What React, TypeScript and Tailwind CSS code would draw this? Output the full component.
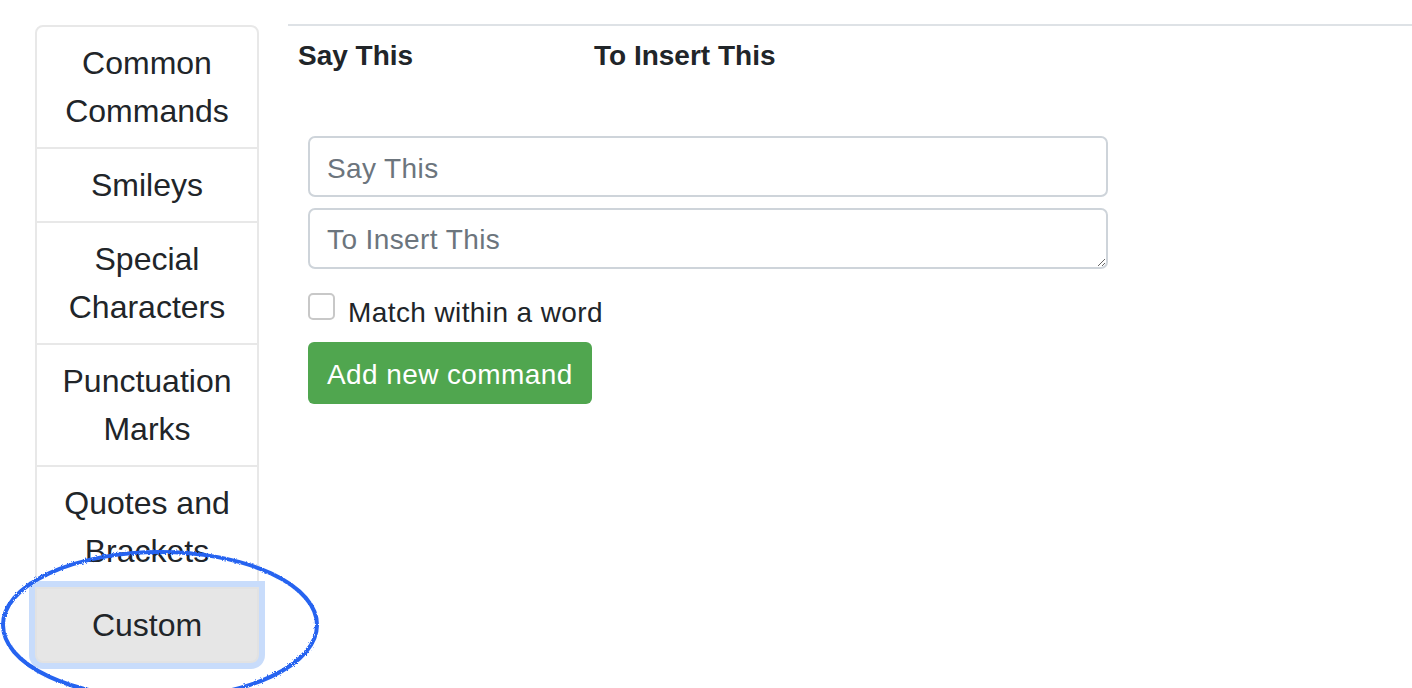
import { useState } from 'react'

const categories = [
  'Common Commands',
  'Smileys',
  'Special Characters',
  'Punctuation Marks',
  'Quotes and Brackets',
]

function Sidebar() {
  return (
    <div className="w-[224px] mt-[25px] flex flex-col text-[32px] leading-[48px] text-[#212529]">
      {categories.map((c, i) => (
        <div
          key={c}
          className={
            'border-x-2 border-b-2 border-[#e8e8e8] px-[20px] py-[12px] text-center bg-white ' +
            (i === 0 ? 'border-t-2 rounded-t-[8px]' : '')
          }
        >
          {c}
        </div>
      ))}
      <div className="relative z-10 -mt-[2px] border-2 border-[#e2e2e2] bg-[#e6e6e6] rounded-b-[8px] px-[20px] py-[12px] text-center ring-[6px] ring-[#c8dcfb]">
        Custom
      </div>
    </div>
  )
}

function CommandForm() {
  const [say, setSay] = useState('')
  const [insert, setInsert] = useState('')
  const [withinWord, setWithinWord] = useState(false)

  return (
    <div className="pl-[20px] pt-[59px] flex flex-col items-start text-[28px] leading-[42px] tracking-[0.4px]">
      <input
        value={say}
        onChange={(e) => setSay(e.target.value)}
        placeholder="Say This"
        className="w-[800px] h-[61px] border-2 border-[#ced4da] rounded-[7px] px-[17px] pt-[4px] text-[#495057] placeholder:text-[#6c757d] outline-none"
      />
      <textarea
        value={insert}
        onChange={(e) => setInsert(e.target.value)}
        placeholder="To Insert This"
        rows={1}
        className="mt-[11px] w-[800px] h-[61px] border-2 border-[#ced4da] rounded-[7px] px-[17px] pt-[9px] pb-[6px] text-[#495057] placeholder:text-[#6c757d] outline-none resize-y"
      />
      <label className="mt-[22px] flex items-start gap-[13px] text-[#212529]">
        <span
          onClick={() => setWithinWord(!withinWord)}
          className={
            'mt-[2px] w-[27px] h-[27px] rounded-[5px] border-2 border-[#c8c8c8] ' +
            (withinWord ? 'bg-[#007bff]' : 'bg-white')
          }
        />
        <span className="pt-[1px] -mb-[1px]">Match within a word</span>
      </label>
      <button className="mt-[9px] h-[62px] px-[19px] pt-[3px] rounded-[6px] bg-[#50a64f] text-white">
        Add new command
      </button>
    </div>
  )
}

export default function App() {
  return (
    <div
      className="relative w-[1412px] h-[688px] overflow-hidden bg-white flex items-start pl-[35px]"
      style={{ fontFamily: '"Liberation Sans", Arial, sans-serif' }}
    >
      <Sidebar />
      <div className="ml-[29px] mt-[24px] flex-1 border-t-2 border-[#dee2e6]">
        <div className="flex pt-[9px] text-[28px] leading-[42px] font-bold text-[#212529]">
          <div className="w-[296px] pl-[10px]">Say This</div>
          <div className="pl-[10px]">To Insert This</div>
        </div>
        <CommandForm />
      </div>

      {/* hand drawn highlight around the Custom tab */}
      <svg className="absolute left-0 top-0 pointer-events-none z-20" width="1412" height="688">
        <defs>
          <filter id="rough">
            <feTurbulence type="fractalNoise" baseFrequency="0.9" numOctaves="2" result="n" />
            <feDisplacementMap in="SourceGraphic" in2="n" scale="3" />
          </filter>
        </defs>
        <ellipse
          cx="160"
          cy="625"
          rx="157"
          ry="73"
          fill="none"
          stroke="#2563f0"
          strokeWidth="4"
          filter="url(#rough)"
        />
      </svg>
    </div>
  )
}
